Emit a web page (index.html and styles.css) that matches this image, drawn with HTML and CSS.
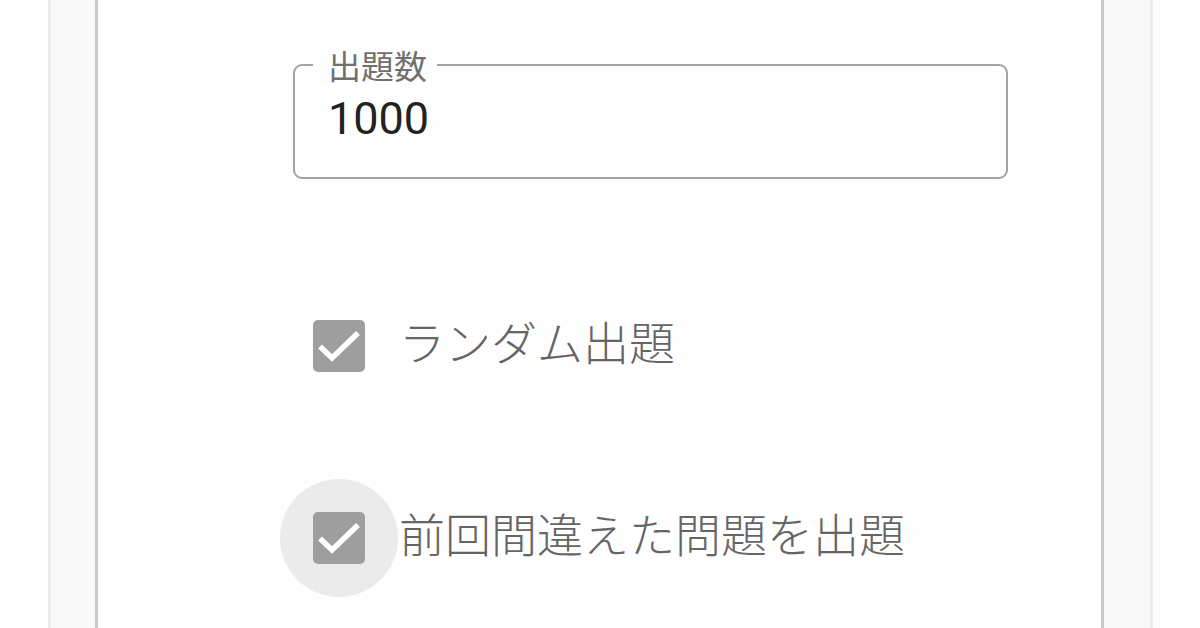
FILE: index.html
```html
<!DOCTYPE html>
<html lang="ja">
<head>
<meta charset="utf-8">
<link rel="stylesheet" href="styles.css">
</head>
<body>
<div class="page">
  <div class="outer">
    <div class="card">
      <fieldset class="field">
        <legend class="field-label">出題数</legend>
        <div class="field-value">1000</div>
      </fieldset>
      <div class="options">
        <label class="option">
          <span class="ripple">
            <span class="box"><svg viewBox="0 0 52 52" width="52" height="52"><polyline points="7,26.5 19,38 45,13" fill="none" stroke="#fff" stroke-width="5.5"/></svg></span>
          </span>
          <span class="option-text">ランダム出題</span>
        </label>
        <label class="option">
          <span class="ripple active">
            <span class="box"><svg viewBox="0 0 52 52" width="52" height="52"><polyline points="7,26.5 19,38 45,13" fill="none" stroke="#fff" stroke-width="5.5"/></svg></span>
          </span>
          <span class="option-text">前回間違えた問題を出題</span>
        </label>
      </div>
    </div>
  </div>
</div>
</body>
</html>
```

FILE: styles.css
```css
html, body {
  margin: 0;
  padding: 0;
  background: #fdfdfd;
  font-family: Roboto, "Noto Sans CJK JP", sans-serif;
}
.page {
  height: 628px;
  overflow: hidden;
  display: flex;
  padding-left: 48px;
}
.outer {
  box-sizing: border-box;
  width: 1105px;
  border-left: 3px solid #ececec;
  border-right: 3px solid #ececec;
  background: #f9f9f9;
  padding: 0 46px 0 44px;
  display: flex;
}
.card {
  flex: 1;
  background: #fefefe;
  border-left: 3px solid #c9c9c9;
  border-right: 3px solid #c9c9c9;
  padding-top: 45px;
}
.field {
  margin: 0 93px 0 195px;
  padding: 0 0 0 33px;
  height: 134px;
  box-sizing: border-box;
  border: 2px solid #a3a3a3;
  border-radius: 9px;
}
.field-label {
  margin-left: -15px;
  padding: 0 10px 0 15px;
  font-family: "Noto Sans CJK JP", sans-serif;
  font-size: 33px;
  line-height: 40px;
  color: #707070;
}
.field-value {
  font-family: Roboto, sans-serif;
  font-size: 45px;
  line-height: 52px;
  color: #222;
  margin-top: 8px;
}
.options {
  display: flex;
  flex-direction: column;
  gap: 74px;
  margin-top: 108px;
  padding-left: 182px;
}
.option {
  display: flex;
  align-items: center;
}
.ripple {
  width: 118px;
  height: 118px;
  border-radius: 50%;
  display: flex;
  align-items: center;
  justify-content: center;
  flex: none;
}
.ripple.active {
  background: #ebebeb;
}
.box {
  width: 52px;
  height: 52px;
  border-radius: 5px;
  background: #9e9e9e;
  display: block;
}
.box svg {
  display: block;
}
.option-text {
  font-family: "Noto Sans CJK JP", sans-serif;
  font-size: 46px;
  font-weight: 300;
  line-height: 60px;
  color: #656565;
  margin-top: -12px;
  margin-left: 1px;
}
```
